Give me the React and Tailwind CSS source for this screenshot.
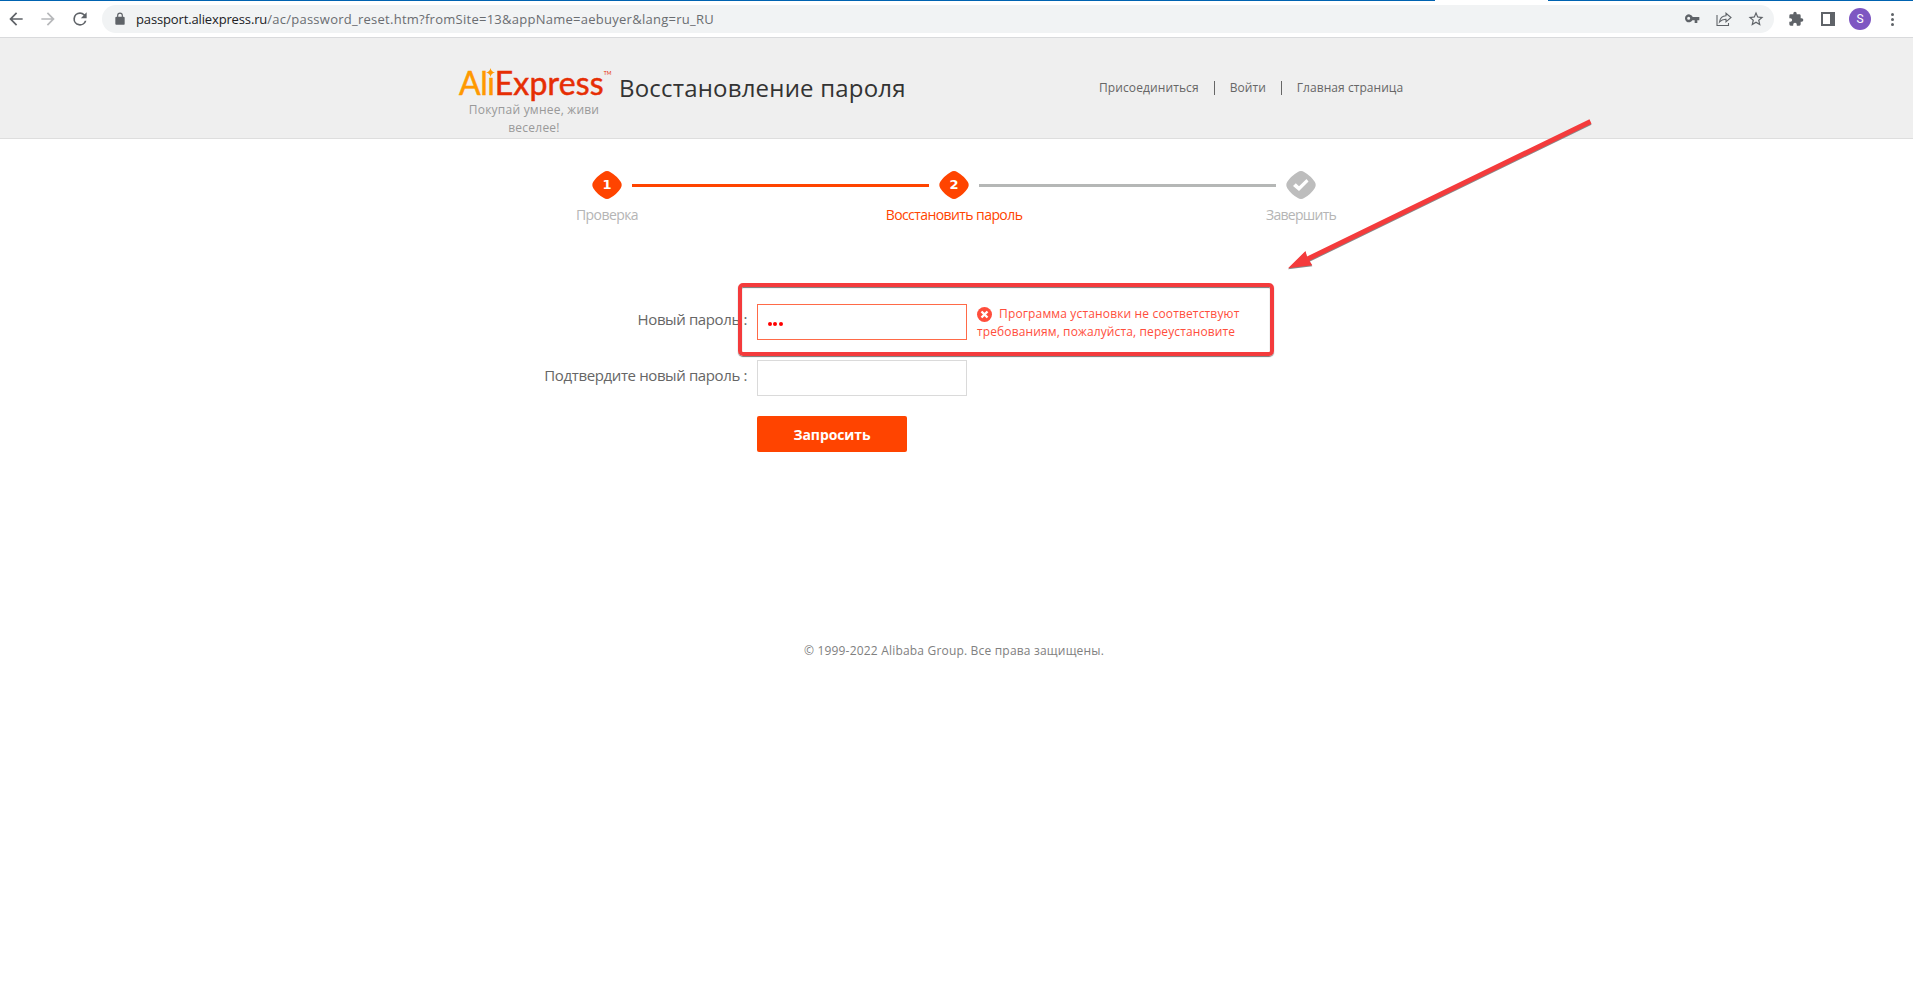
import React from 'react';

function ToolbarIcon({ className = '', children }) {
  return (
    <svg viewBox="0 0 24 24" className={`shrink-0 fill-[#5f6368] ${className}`}>
      {children}
    </svg>
  );
}

function BrowserBar() {
  return (
    <div className="flex h-[38px] flex-col border-b border-[#d9dadc] bg-white">
      <div className="flex h-px w-full bg-[#0063b1]">
        <div className="ml-[1435px] w-[113px] bg-white" />
      </div>
      <div className="flex h-9 items-center">
        <ToolbarIcon className="ml-[6px] h-5 w-5">
          <path d="M20 11H7.83l5.59-5.59L12 4l-8 8 8 8 1.41-1.41L7.83 13H20v-2z" />
        </ToolbarIcon>
        <ToolbarIcon className="ml-3 h-5 w-5 opacity-45">
          <path d="M12 4l-1.41 1.41L16.17 11H4v2h12.17l-5.58 5.59L12 20l8-8z" />
        </ToolbarIcon>
        <ToolbarIcon className="ml-3 h-5 w-5">
          <path d="M17.65 6.35A7.96 7.96 0 0 0 12 4a8 8 0 1 0 7.73 10h-2.08A6 6 0 1 1 12 6c1.66 0 3.14.69 4.22 1.78L13 11h7V4l-2.35 2.35z" />
        </ToolbarIcon>
        <div className="ml-3 flex h-7 w-[1672px] items-center rounded-full bg-[#f1f3f4] pl-[11px] pr-[9px]">
          <ToolbarIcon className="h-[14px] w-[14px]">
            <path d="M18 8h-1V6A5 5 0 0 0 7 6v2H6a2 2 0 0 0-2 2v10c0 1.1.9 2 2 2h12a2 2 0 0 0 2-2V10a2 2 0 0 0-2-2zM9 6a3 3 0 0 1 6 0v2H9V6z" />
          </ToolbarIcon>
          <div className="ml-[9px] flex grow text-[13px] leading-7 text-[#6a6d71]">
            <span className="tracking-[-0.14px] text-[#202124]">passport.aliexpress.ru</span>
            <span className="tracking-[0.26px]">/ac/password_reset.htm?fromSite=13&amp;appName=aebuyer&amp;lang=ru_RU</span>
          </div>
          <ToolbarIcon className="h-4 w-4">
            <path d="M12.65 8A6 6 0 1 0 12.65 14H16v4h4v-4h3V9H12.65zM7 13.3a2.3 2.3 0 1 1 0-4.6 2.3 2.3 0 0 1 0 4.6z" />
          </ToolbarIcon>
          <svg viewBox="0 0 16 16" className="ml-4 h-4 w-4 fill-none stroke-[#5f6368]" strokeWidth="1.1">
            <path d="M1 4v10.5h11.500V12M3.500 11c.6-4 3-6 6.500-6.200V2.300L15 6.500l-5 4.300V8.300C7 8.200 5.200 9 3.500 11z" />
          </svg>
          <ToolbarIcon className="ml-[15px] h-[18px] w-[18px]">
            <path d="M22 9.240l-7.190-.62L12 2 9.190 8.630 2 9.240l5.460 4.730L5.820 21 12 17.270 18.180 21l-1.630-7.030L22 9.240zM12 15.400l-3.760 2.270 1-4.280-3.320-2.880 4.380-.38L12 6.100l1.710 4.040 4.380.38-3.320 2.880 1 4.280L12 15.400z" />
          </ToolbarIcon>
        </div>
        <ToolbarIcon className="ml-[14px] h-4 w-4">
          <path d="M20.500 11H19V7a2 2 0 0 0-2-2h-4V3.500a2.500 2.500 0 0 0-5 0V5H4a2 2 0 0 0-2 2v3.800h1.500a2.700 2.700 0 0 1 0 5.400H2V20a2 2 0 0 0 2 2h3.800v-1.500a2.700 2.700 0 0 1 5.400 0V22H17a2 2 0 0 0 2-2v-4h1.500a2.500 2.500 0 0 0 0-5z" />
        </ToolbarIcon>
        <div className="ml-[17px] h-[14px] w-[14px] border-2 border-r-[5px] border-[#5f6368]" />
        <div className="ml-[14px] flex h-[22px] w-[22px] items-center justify-center rounded-full bg-[#7e57c2] font-['Roboto',sans-serif] text-[12px] text-white">
          S
        </div>
        <div className="ml-5 flex flex-col gap-[2px]">
          <i className="h-[3px] w-[3px] rounded-full bg-[#5f6368]" />
          <i className="h-[3px] w-[3px] rounded-full bg-[#5f6368]" />
          <i className="h-[3px] w-[3px] rounded-full bg-[#5f6368]" />
        </div>
      </div>
    </div>
  );
}

function Logo() {
  return (
    <div className="relative flex h-7 items-start font-['Lato',sans-serif] text-[32px] leading-7 text-[#e62e04]">
      <span className="tracking-[-0.4px] text-[#ff9900] [-webkit-text-stroke:0.5px_#ff9900]">Alı</span>
      <span className="tracking-[0.16px] [-webkit-text-stroke:0.5px_#e62e04]">Express</span>
      <span className="mt-[2px] text-[5px] leading-[5px]">TM</span>
      <svg viewBox="0 0 8 8" className="absolute left-[27px] -top-px h-[9px] w-[9px] fill-[#ff9900]">
        <path d="M4 0q.6 3.400 4 4-3.400.6-4 4-.6-3.400-4-4 3.400-.6 4-4z" />
      </svg>
    </div>
  );
}

function Header() {
  return (
    <header className="flex h-[101px] border-b border-[#dedede] bg-[#efefef] pl-[459px]">
      <div className="w-[150px] pt-[31px]">
        <Logo />
        <div className="mt-1 whitespace-nowrap text-center text-[12px] leading-[18px] tracking-[0.23px] text-[#999]">
          Покупай умнее, живи
          <br />
          веселее!
        </div>
      </div>
      <h1 className="ml-[10px] mt-[34px] w-[480px] text-[24px] leading-[32px] tracking-[0.19px] text-[#333]">
        Восстановление пароля
      </h1>
      <nav className="mt-[41px] flex h-[18px] items-center text-[12px] leading-[18px] tracking-[0.05px] text-[#666]">
        <a className="tracking-[0.1px]">Присоединиться</a>
        <i className="mx-[15px] h-[14px] w-px bg-[#666]" />
        <a>Войти</a>
        <i className="mx-[15px] h-[14px] w-px bg-[#666]" />
        <a>Главная страница</a>
      </nav>
    </header>
  );
}

function Step({ mark, label, done }) {
  return (
    <div className="flex w-[30px] flex-col items-center">
      <div className="grid h-[29px] w-[30px] items-start justify-items-center">
        <svg viewBox="0 0 30 28" className={`col-start-1 row-start-1 h-7 w-[30px] ${done ? 'fill-[#bdbdbd]' : 'fill-[#ff4400]'}`}>
          <path d="M11.500 1.200Q15-1.200 18.500 1.200Q25 5 28.700 10.800Q30.700 14 28.700 17.200Q25 23 18.500 26.800Q15 29.200 11.500 26.800Q5 23 1.300 17.200Q-.7 14 1.300 10.800Q5 5 11.500 1.200Z" />
          {done && (
            <path d="M7 15l2.800-2.800 3.200 3L20.500 8l2 2.500L13 20z" className="fill-white" />
          )}
        </svg>
        {mark && (
          <span className="col-start-1 row-start-1 font-['DejaVu_Sans',sans-serif] text-[13px] font-bold leading-[27px] text-white">{mark}</span>
        )}
      </div>
      <span
        className={`mt-[5px] whitespace-nowrap text-[14px] leading-5 ${done ? 'tracking-[-0.72px]' : 'tracking-[-0.58px]'} ${mark === '2' ? 'text-[#ff4400]' : 'text-[#b5b5b5]'}`}
      >
        {label}
      </span>
    </div>
  );
}

function Steps() {
  return (
    <div className="flex pl-[592px] pt-[32px]">
      <Step mark="1" label="Проверка" />
      <div className="mx-[10px] mt-[13px] h-[3px] w-[297px] bg-[#ff4400]" />
      <Step mark="2" label="Восстановить пароль" />
      <div className="mx-[10px] mt-[13px] h-[3px] w-[297px] bg-[#b5b7b6]" />
      <Step done label="Завершить" />
    </div>
  );
}

function ErrorMark() {
  return (
    <svg viewBox="0 0 15 15" className="mr-[7px] inline-block h-[15px] w-[15px] align-[-4px]">
      <circle cx="7.5" cy="7.5" r="7.5" fill="#ff4e3c" />
      <path d="M4.500 4.500l6 6M10.500 4.500l-6 6" stroke="#fff" strokeWidth="2.400" />
    </svg>
  );
}

function ResetForm() {
  return (
    <form className="mt-[79px]">
      <div className="flex h-14">
        <label className="mt-[5px] w-[747px] text-right text-[15px] leading-5 tracking-[-0.38px] text-[#666]">Новый пароль :</label>
        <div className="ml-[10px] flex h-9 w-[210px] items-center gap-[1.5px] border border-[#ff6a48] pl-[9.5px] pt-[3px]">
          <i className="h-[4px] w-[4px] rounded-full bg-[#ff0000]" />
          <i className="h-[4px] w-[4px] rounded-full bg-[#ff0000]" />
          <i className="h-[4px] w-[4px] rounded-full bg-[#ff0000]" />
        </div>
        <div className="ml-[10px] mt-px whitespace-nowrap text-[12px] leading-[18px] tracking-[0.15px] text-[#ff4e3c]">
          <div className="h-[18px]">
            <ErrorMark />
            Программа установки не соответствуют
          </div>
          <div className="tracking-[0.12px]">требованиям, пожалуйста, переустановите</div>
        </div>
      </div>
      <div className="flex h-14">
        <label className="mt-[5px] w-[747px] text-right text-[15px] leading-5 tracking-[-0.38px] text-[#666]">
          Подтвердите новый пароль :
        </label>
        <div className="ml-[10px] h-9 w-[210px] border border-[#dadada]" />
      </div>
      <button
        type="button"
        className="ml-[757px] block h-9 w-[150px] rounded-[2px] bg-[#ff4400] pt-px text-center text-[14px] font-bold leading-9 tracking-[-0.1px] text-white"
      >
        Запросить
      </button>
    </form>
  );
}

function Annotations() {
  return (
    <>
      <div className="absolute left-[738px] top-[283px] h-[73px] w-[536px] rounded-[5px] border-4 border-[#f43b3c] shadow-[0_1px_1px_#777,inset_0_1px_1px_#777]" />
      <svg viewBox="0 0 320 160" className="absolute left-[1280px] top-[112px] h-[160px] w-[320px] drop-shadow-[0_1px_0.5px_#888]">
        <path d="M309.500 7.200L311.500 11.700L29.500 148.800L32.300 153.300L8 156.200L25.500 139L27 144.400Z" fill="#f43b3c" />
      </svg>
    </>
  );
}

export default function App() {
  return (
    <div className="relative h-[1006px] w-[1913px] overflow-hidden bg-white font-['Open_Sans','Noto_Sans',sans-serif]">
      <BrowserBar />
      <Header />
      <Steps />
      <ResetForm />
      <footer className="mt-[190px] w-[1908px] text-center text-[12px] leading-[18px] tracking-[0.19px] text-[#808080]">
        © 1999-2022 Alibaba Group. Все права защищены.
      </footer>
      <Annotations />
    </div>
  );
}
